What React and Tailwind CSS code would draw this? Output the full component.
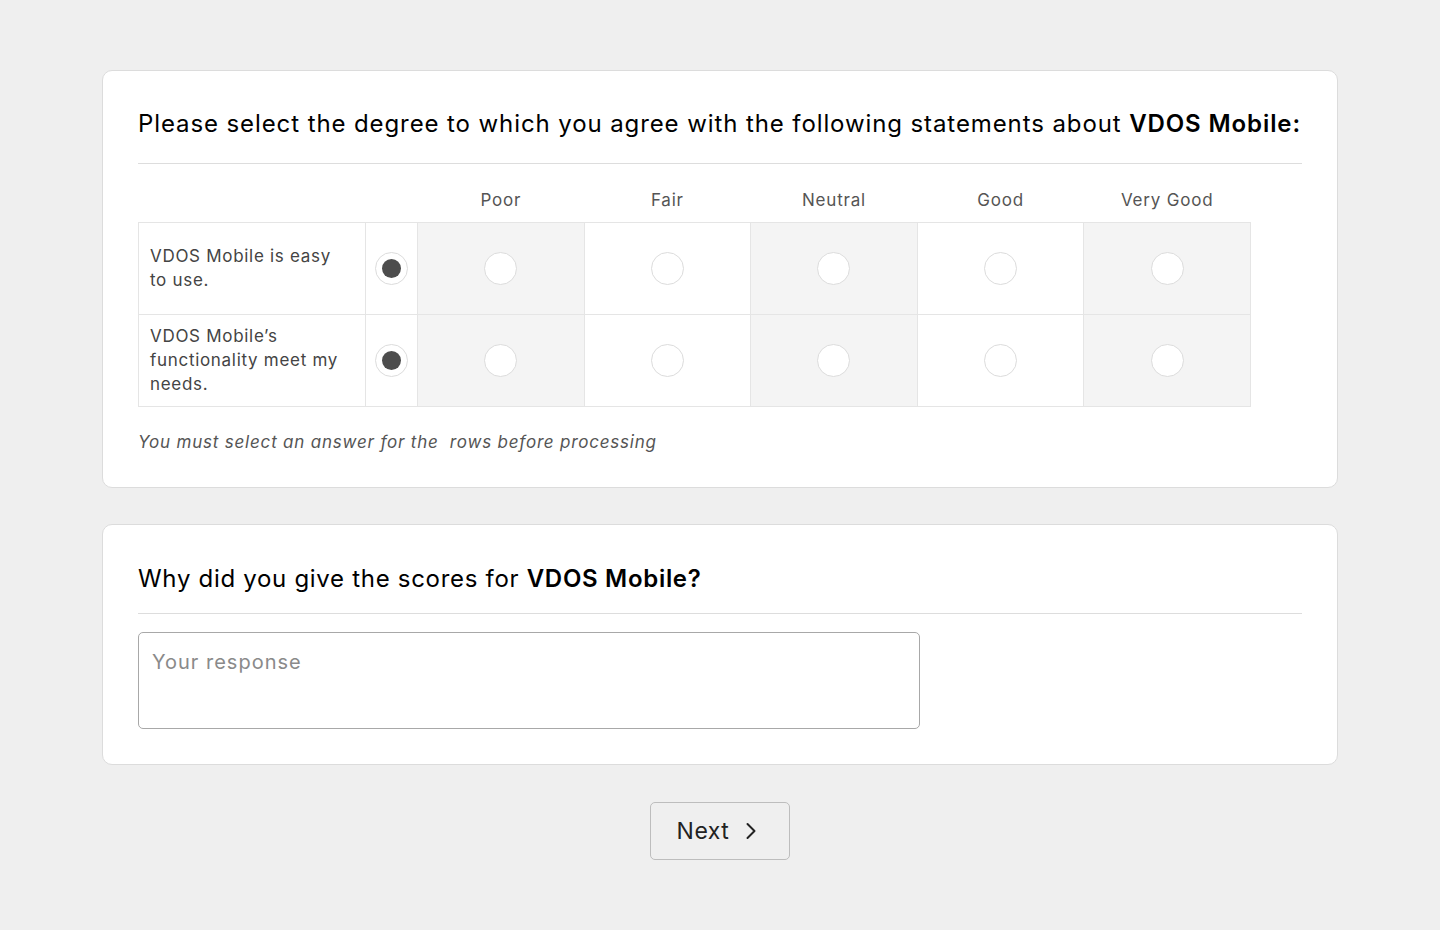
import React from "react";

const columns = ["Poor", "Fair", "Neutral", "Good", "Very Good"];

const rows = [
  { id: "easy", lines: ["VDOS Mobile is easy", "to use."] },
  { id: "needs", lines: ["VDOS Mobile’s", "functionality meet my", "needs."] },
];

const Radio = ({ checked }) => (
  <span className="flex w-[33px] h-[33px] rounded-full border-[1.5px] border-[#dcdcdc] bg-white items-center justify-center">
    {checked && <span className="w-[19px] h-[19px] rounded-full bg-[#4d4d4d]" />}
  </span>
);

const Chevron = () => (
  <svg width="12" height="18" viewBox="0 0 12 18" fill="none">
    <path d="M2.5 2 L9.5 9 L2.5 16" stroke="#222" strokeWidth="2" strokeLinecap="round" strokeLinejoin="round" />
  </svg>
);

const App = () => {
  return (
    <div className="min-h-screen bg-[#efefef] pt-[70px] pb-[70px] font-['Inter',sans-serif] text-[#111]">
      <div className="w-[1236px] mx-auto flex flex-col gap-[36px]">
        {/* Rating matrix */}
        <section className="bg-white border border-[#dcdcdc] rounded-[10px] px-[35px] pt-[37px] pb-[33px]">
          <h2 className="text-[24px] leading-[32px] tracking-[0.9px] text-black">
            Please select the degree to which you agree with the following statements about{" "}
            <span className="font-semibold">VDOS Mobile:</span>
          </h2>
          <div className="mt-[23px] h-px bg-[#dddddd]" />

          <table className="w-[1112px] border-collapse table-fixed">
            <colgroup>
              <col className="w-[227px]" />
              <col className="w-[52px]" />
              {columns.map((c) => (
                <col key={c} className="w-[166.6px]" />
              ))}
            </colgroup>
            <thead>
              <tr className="h-[58px]">
                <th />
                <th />
                {columns.map((c) => (
                  <th
                    key={c}
                    className="align-bottom pb-[10px] text-[17px] leading-[24px] tracking-[0.8px] font-normal text-[#555]"
                  >
                    {c}
                  </th>
                ))}
              </tr>
            </thead>
            <tbody>
              {rows.map((row) => (
                <tr key={row.id} className="h-[92px]">
                  <td className="border border-[#e5e5e5] px-[11px] text-[17px] leading-[24px] tracking-[0.7px] text-[#444]">
                    {row.lines.map((l, i) => (
                      <React.Fragment key={i}>
                        {l}
                        {i < row.lines.length - 1 && <br />}
                      </React.Fragment>
                    ))}
                  </td>
                  <td className="border border-[#e5e5e5] align-middle">
                    <div className="flex justify-center pt-[1px]">
                      <Radio checked />
                    </div>
                  </td>
                  {columns.map((c, i) => (
                    <td
                      key={c}
                      className={`border border-[#e5e5e5] align-middle ${
                        i % 2 === 0 ? "bg-[#f4f4f4]" : "bg-white"
                      }`}
                    >
                      <div className="flex justify-center">
                        <Radio />
                      </div>
                    </td>
                  ))}
                </tr>
              ))}
            </tbody>
          </table>

          <p className="mt-[23px] text-[17px] leading-[24px] tracking-[0.8px] italic text-[#555]">
            You must select an answer for the&nbsp; rows before processing
          </p>
        </section>

        {/* Open question */}
        <section className="bg-white border border-[#dcdcdc] rounded-[10px] px-[35px] pt-[38px] pb-[35px]">
          <h2 className="text-[24px] leading-[32px] tracking-[0.7px] text-black">
            Why did you give the scores for <span className="font-semibold">VDOS Mobile?</span>
          </h2>
          <div className="mt-[18px] h-px bg-[#dddddd]" />
          <textarea
            placeholder="Your response"
            className="mt-[18px] block w-[782px] h-[97px] resize-none rounded-[5px] border border-[#a8a8a8] px-[13px] pt-[15px] text-[20px] leading-[28px] tracking-[1px] text-[#333] placeholder:text-[#8a8a8a] outline-none font-['Inter',sans-serif]"
          />
        </section>

        {/* Navigation */}
        <div className="flex justify-center mt-[1px]">
          <button className="w-[140px] h-[58px] rounded-[5px] border border-[#bdbdbd] bg-[#efefef] flex items-center justify-center gap-[16px] pr-[6px] text-[23px] tracking-[0.5px] text-[#222]">
            <span className="translate-y-[1px]">Next</span>
            <Chevron />
          </button>
        </div>
      </div>
    </div>
  );
};

export default App;
